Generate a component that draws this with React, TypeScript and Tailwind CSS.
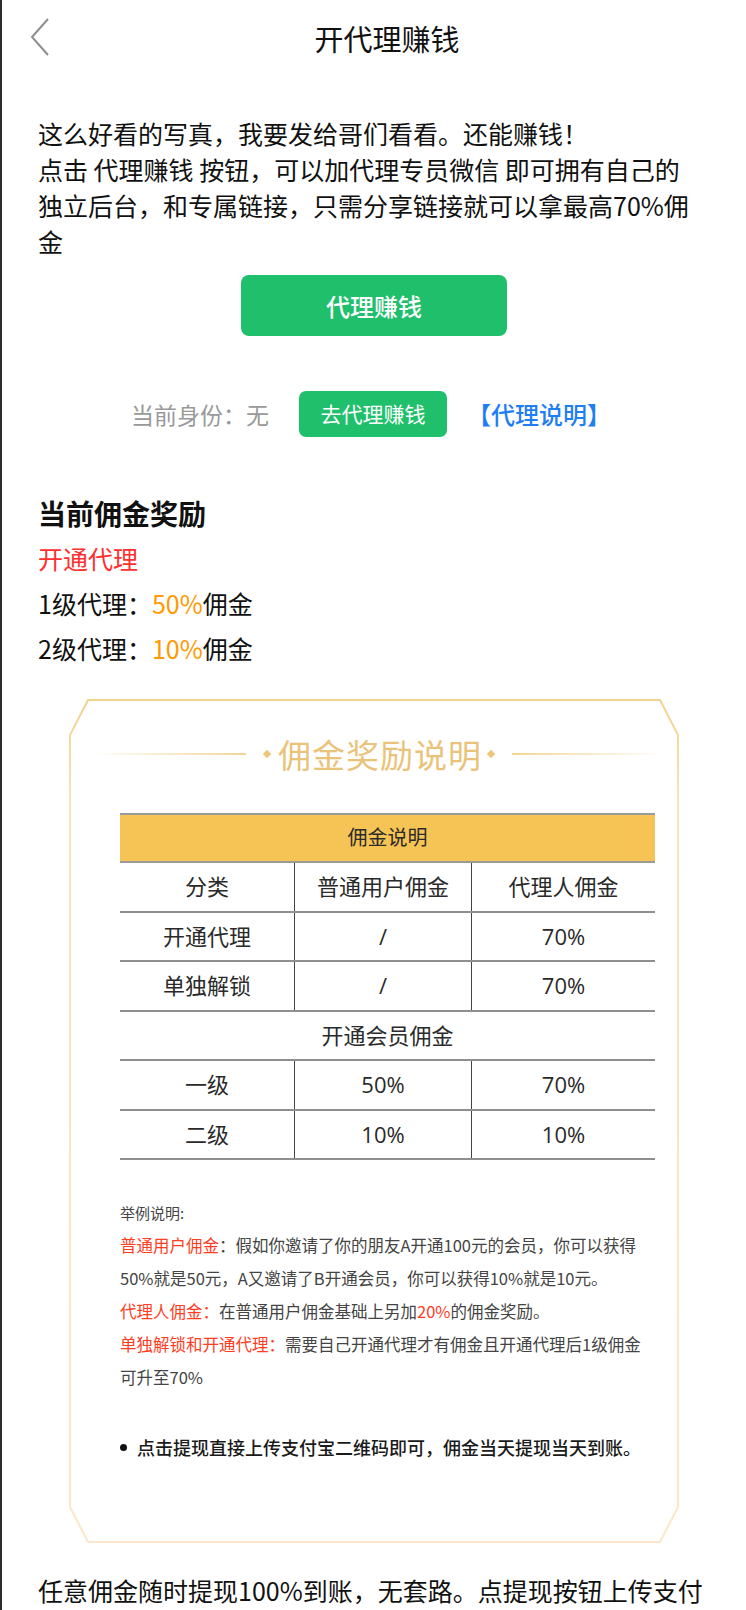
import React from "react";

function BackIcon() {
  return (
    <svg width="22" height="40" viewBox="0 0 22 40" fill="none">
      <path d="M19 2 L3 20 L19 38" stroke="#8e8e8e" strokeWidth="2" />
    </svg>
  );
}

function CardFrame() {
  return (
    <svg className="absolute inset-0 h-full w-full" viewBox="0 0 610 844" preserveAspectRatio="none" fill="none">
      <defs>
        <linearGradient id="frame" x1="0" y1="0" x2="0" y2="1">
          <stop offset="0" stopColor="#f1d28e" />
          <stop offset="0.12" stopColor="#f8e3bd" />
          <stop offset="1" stopColor="#fbe7c9" />
        </linearGradient>
      </defs>
      <polygon points="19,1 591,1 609,36 609,808 591,843 19,843 1,808 1,36" stroke="url(#frame)" strokeWidth="2" />
    </svg>
  );
}

const rows: [string, string, string][] = [
  ["开通代理", "/", "70%"],
  ["单独解锁", "/", "70%"],
];
const levelRows: [string, string, string][] = [
  ["一级", "50%", "70%"],
  ["二级", "10%", "10%"],
];

function Row({ cells }: { cells: [string, string, string] }) {
  return (
    <div className="grid h-[49.5px] grid-cols-[175px_177px_1fr] border-b-2 border-[#8f8f8f]">
      <div className="flex items-center justify-center border-r border-[#444]">{cells[0]}</div>
      <div className="flex items-center justify-center border-r border-[#444]">{cells[1]}</div>
      <div className="flex items-center justify-center">{cells[2]}</div>
    </div>
  );
}

export default function App() {
  return (
    <div className="min-h-[1610px] w-[746px] border-l-2 border-[#2b2b2b] bg-white font-['Noto_Sans_CJK_SC',sans-serif] text-[#111]">
      {/* header */}
      <div className="relative flex h-[76px] items-center justify-center">
        <div className="absolute left-[27px] top-[17px]">
          <BackIcon />
        </div>
        <h1 className="pl-[26px] text-[29px] leading-none text-[#111]">开代理赚钱</h1>
      </div>

      <p className="ml-[36px] mt-[39px] w-[658px] text-[25px] leading-[36px]">
        这么好看的写真，我要发给哥们看看。还能赚钱！
        <br />
        点击 代理赚钱 按钮，可以加代理专员微信 即可拥有自己的独立后台，和专属链接，只需分享链接就可以拿最高70%佣金
      </p>

      <div className="mt-[16px] flex justify-center">
        <button className="h-[61px] w-[266px] rounded-[8px] bg-[#1fbf6c] text-[24px] font-medium text-white">代理赚钱</button>
      </div>

      <div className="mt-[55px] flex items-center justify-center gap-[30px] pr-[6px]">
        <span className="text-[23px] text-[#999]">当前身份：无</span>
        <button className="h-[46px] w-[148px] rounded-[7px] bg-[#1fbf6c] text-[21px] text-white">去代理赚钱</button>
        <span className="-ml-[10px] text-[24px] font-medium text-[#1e7ef2]">【代理说明】</span>
      </div>

      <div className="ml-[36px] mt-[54px] leading-[45px]">
        <div className="text-[28px] font-bold">当前佣金奖励</div>
        <div className="text-[25px] text-[#fe3030]">开通代理</div>
        <div className="text-[25px]">
          1级代理：<span className="text-[#ff9900]">50%</span>佣金
        </div>
        <div className="text-[25px]">
          2级代理：<span className="text-[#ff9900]">10%</span>佣金
        </div>
      </div>

      {/* commission card */}
      <div className="relative ml-[67px] mt-[28px] h-[844px] w-[610px]">
        <CardFrame />
        <div className="relative pt-[35px]">
          <div className="flex h-[40px] items-center justify-center whitespace-nowrap pl-[10px]">
            <div className="h-[2px] w-[152px] shrink-0 bg-gradient-to-r from-transparent to-[#f2d595]" />
            <div className="ml-[18px] mr-[8px] h-[6px] w-[6px] shrink-0 rotate-45 bg-[#ebc67c]" />
            <span className="shrink-0 text-[33px] leading-[40px] tracking-[1px] text-[#eac37a]">佣金奖励说明</span>
            <div className="ml-[6px] mr-[18px] h-[6px] w-[6px] shrink-0 rotate-45 bg-[#ebc67c]" />
            <div className="h-[2px] w-[152px] shrink-0 bg-gradient-to-l from-transparent to-[#f2d595]" />
          </div>

          <div className="px-[51px]">
            <div className="mt-[39px] w-[535px] font-['Open_Sans','Noto_Sans_CJK_SC',sans-serif] text-[22px] text-[#2a2a2a]">
              <div className="flex h-[50px] items-center justify-center border-y-2 border-[#9a9a9a] bg-[#f6c454] text-[20px]">
                佣金说明
              </div>
              <Row cells={["分类", "普通用户佣金", "代理人佣金"]} />
              {rows.map((r) => (
                <Row key={r[0]} cells={r} />
              ))}
              <div className="flex h-[49.5px] items-center justify-center border-b-2 border-[#8f8f8f]">开通会员佣金</div>
              {levelRows.map((r) => (
                <Row key={r[0]} cells={r} />
              ))}
            </div>

            <div className="mt-[36px] whitespace-nowrap text-[16.5px] leading-[33px] text-[#444]">
              <div className="text-[15px]">举例说明:</div>
              <div>
                <span className="text-[#ff3d1f]">普通用户佣金</span>：假如你邀请了你的朋友A开通100元的会员，你可以获得
              </div>
              <div>50%就是50元，A又邀请了B开通会员，你可以获得10%就是10元。</div>
              <div>
                <span className="text-[#ff3d1f]">代理人佣金：</span>在普通用户佣金基础上另加<span className="text-[#ff3d1f]">20%</span>的佣金奖励。
              </div>
              <div>
                <span className="text-[#ff3d1f]">单独解锁和开通代理：</span>需要自己开通代理才有佣金且开通代理后1级佣金
              </div>
              <div>可升至70%</div>
            </div>

            <div className="mt-[38px] flex h-[30px] items-center whitespace-nowrap text-[18px] font-medium text-[#1a1a1a]">
              <span className="mr-[10px] h-[7px] w-[7px] shrink-0 rounded-full bg-[#111]" />
              点击提现直接上传支付宝二维码即可，佣金当天提现当天到账。
            </div>
          </div>
        </div>
      </div>

      <p className="ml-[36px] mt-[29px] whitespace-nowrap text-[25px] leading-[36px]">
        任意佣金随时提现100%到账，无套路。点提现按钮上传支付
      </p>
    </div>
  );
}
